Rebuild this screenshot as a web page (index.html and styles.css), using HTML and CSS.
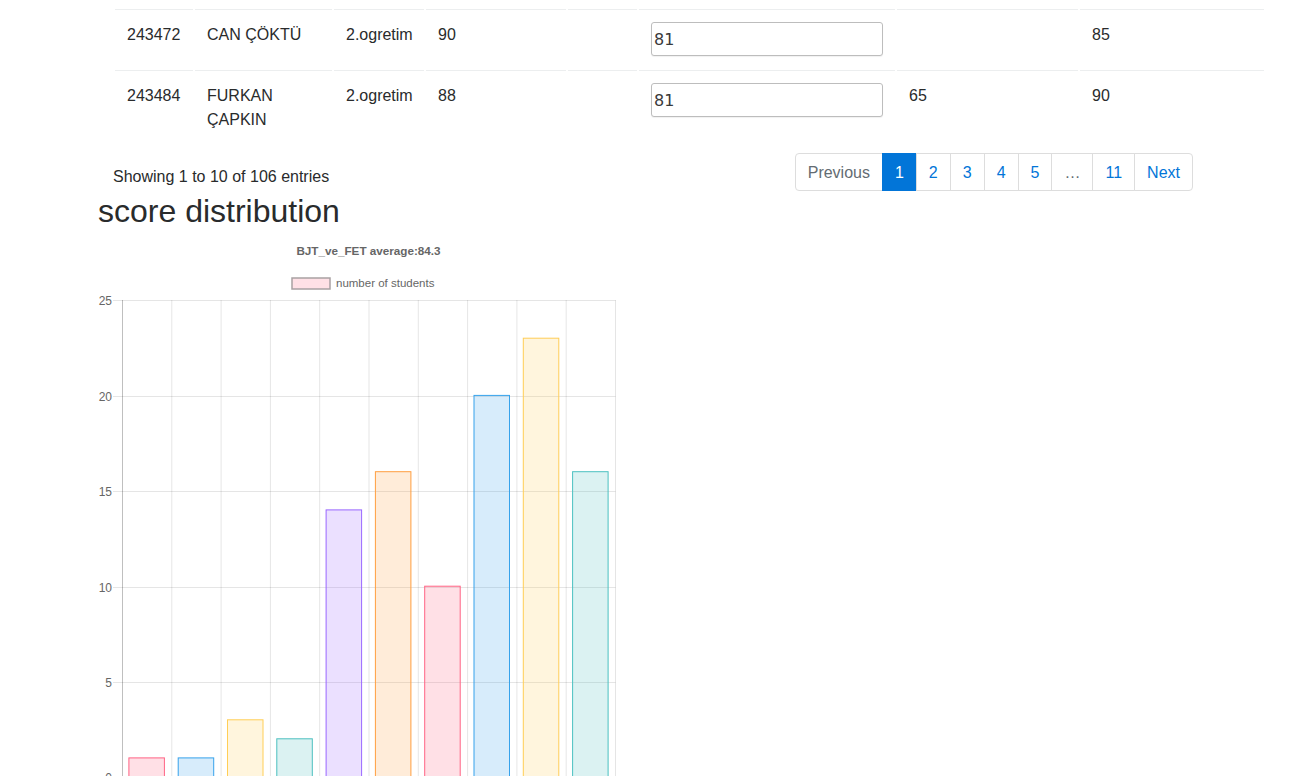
FILE: index.html
```html
<!DOCTYPE html>
<html lang="tr">
<head>
<meta charset="utf-8">
<title>score distribution</title>
<link rel="stylesheet" href="styles.css">
</head>
<body>
<div class="page">
  <div class="table-block">
    <table class="data">
      <colgroup>
        <col class="c-id"><col class="c-name"><col class="c-type"><col class="c-score">
        <col class="c-empty"><col class="c-input"><col class="c-extra"><col class="c-final">
      </colgroup>
      <tbody>
        <tr>
          <td>243472</td>
          <td>CAN ÇÖKTÜ</td>
          <td>2.ogretim</td>
          <td>90</td>
          <td></td>
          <td><input class="grade" type="text" value="81"></td>
          <td></td>
          <td>85</td>
        </tr>
        <tr>
          <td>243484</td>
          <td>FURKAN ÇAPKIN</td>
          <td>2.ogretim</td>
          <td>88</td>
          <td></td>
          <td><input class="grade" type="text" value="81"></td>
          <td>65</td>
          <td>90</td>
        </tr>
      </tbody>
    </table>
    <div class="dt-footer">
      <div class="info">Showing 1 to 10 of 106 entries</div>
      <ul class="pagination">
        <li class="page-item first disabled"><span class="page-link">Previous</span></li>
        <li class="page-item active"><span class="page-link">1</span></li>
        <li class="page-item"><span class="page-link">2</span></li>
        <li class="page-item"><span class="page-link">3</span></li>
        <li class="page-item"><span class="page-link">4</span></li>
        <li class="page-item"><span class="page-link">5</span></li>
        <li class="page-item disabled"><span class="page-link">…</span></li>
        <li class="page-item"><span class="page-link">11</span></li>
        <li class="page-item last"><span class="page-link">Next</span></li>
      </ul>
    </div>
  </div>
  <h2 class="section-title">score distribution</h2>
  <svg class="chart" width="541" height="542" viewBox="0 0 541 542" xmlns="http://www.w3.org/2000/svg">
    <text class="ch-title" x="270.5" y="21" text-anchor="middle">BJT_ve_FET average:84.3</text>
    <rect class="legend-box" x="194" y="44" width="38" height="11"/>
    <text class="ch-legend" x="238" y="53">number of students</text>

    <g class="grid">
      <line x1="15" y1="66.5" x2="517.5" y2="66.5"/>
      <line x1="15" y1="162.5" x2="517.5" y2="162.5"/>
      <line x1="15" y1="257.5" x2="517.5" y2="257.5"/>
      <line x1="15" y1="353.5" x2="517.5" y2="353.5"/>
      <line x1="15" y1="448.5" x2="517.5" y2="448.5"/>
      <line x1="15" y1="543.5" x2="517.5" y2="543.5"/>
      <line x1="73.8" y1="66" x2="73.8" y2="553"/>
      <line x1="123.1" y1="66" x2="123.1" y2="553"/>
      <line x1="172.4" y1="66" x2="172.4" y2="553"/>
      <line x1="221.7" y1="66" x2="221.7" y2="553"/>
      <line x1="271" y1="66" x2="271" y2="553"/>
      <line x1="320.3" y1="66" x2="320.3" y2="553"/>
      <line x1="369.6" y1="66" x2="369.6" y2="553"/>
      <line x1="418.9" y1="66" x2="418.9" y2="553"/>
      <line x1="468.2" y1="66" x2="468.2" y2="553"/>
      <line x1="517.5" y1="66" x2="517.5" y2="553"/>
    </g>
    <line class="axis" x1="24.5" y1="66" x2="24.5" y2="553"/>

    <g class="ticks">
      <text x="14" y="70.5" text-anchor="end">25</text>
      <text x="14" y="166.5" text-anchor="end">20</text>
      <text x="14" y="261.5" text-anchor="end">15</text>
      <text x="14" y="357.5" text-anchor="end">10</text>
      <text x="14" y="452.5" text-anchor="end">5</text>
      <text x="14" y="547.5" text-anchor="end">0</text>
    </g>

    <rect class="bar red" x="30.9" y="523.9" width="35.5" height="19.1"/>
    <rect class="bar blue" x="80.2" y="523.9" width="35.5" height="19.1"/>
    <rect class="bar yellow" x="129.5" y="485.8" width="35.5" height="57.2"/>
    <rect class="bar teal" x="178.8" y="504.8" width="35.5" height="38.2"/>
    <rect class="bar purple" x="228.1" y="275.9" width="35.5" height="267.1"/>
    <rect class="bar orange" x="277.4" y="237.7" width="35.5" height="305.3"/>
    <rect class="bar red" x="326.7" y="352.2" width="35.5" height="190.8"/>
    <rect class="bar blue" x="376" y="161.4" width="35.5" height="381.6"/>
    <rect class="bar yellow" x="425.3" y="104.2" width="35.5" height="438.8"/>
    <rect class="bar teal" x="474.6" y="237.7" width="35.5" height="305.3"/>
  </svg>
</div>
</body>
</html>
```

FILE: styles.css
```css
html, body {
  margin: 0;
  padding: 0;
  background: #fff;
  overflow: hidden;
}

body {
  font-family: "Liberation Sans", Arial, sans-serif;
  font-size: 16px;
  line-height: 1.5;
  color: #292b2c;
}

.page {
  padding-left: 98px;
}

.table-block {
  margin-left: 15px;
  width: 1153px;
}

.data {
  width: 1153px;
  table-layout: fixed;
  border-collapse: separate;
  border-spacing: 2px;
  margin: 7px 0 0;
}

.c-id { width: 78px; }
.c-name { width: 137px; }
.c-type { width: 90px; }
.c-score { width: 140px; }
.c-empty { width: 69px; }
.c-input { width: 256px; }
.c-extra { width: 181px; }
.c-final { width: 184px; }

.data td {
  padding: 13px 12px 11px;
  border-top: 1px solid #eceeef;
  vertical-align: top;
  box-sizing: border-box;
}

.grade {
  display: block;
  width: 100%;
  height: 34px;
  box-sizing: border-box;
  margin: -1px 0 1px;
  padding: 1px 2px;
  border: 1px solid #bdbdbd;
  border-radius: 3px;
  font-family: "DejaVu Sans", sans-serif;
  font-size: 16px;
  color: #3a3a3a;
  background: #fff;
  box-shadow: 0 1px 1px rgba(0, 0, 0, 0.06);
}

.dt-footer {
  display: flex;
  justify-content: space-between;
  align-items: flex-start;
  width: 1080px;
  margin-top: 6px;
}

.info {
  padding-top: 14px;
  line-height: 24px;
  color: #292b2c;
}

.pagination {
  display: flex;
  list-style: none;
  margin: 2px 0;
  padding: 0;
}

.page-link {
  display: block;
  padding: 9px 12px 7px;
  line-height: 1.25;
  border: 1px solid #ddd;
  margin-left: -1px;
  color: #0275d8;
  background: #fff;
}

.first .page-link {
  margin-left: 0;
  border-radius: 4px 0 0 4px;
}

.last .page-link {
  border-radius: 0 4px 4px 0;
}

.disabled .page-link {
  color: #636c72;
}

.active .page-link {
  background: #0275d8;
  border-color: #0275d8;
  color: #fff;
}

.section-title {
  margin: -1px 0 4px;
  font-size: 32px;
  font-weight: 500;
  line-height: 38px;
  color: #292b2c;
}

.chart {
  display: block;
}

.chart text {
  font-family: "Liberation Sans", Arial, sans-serif;
  font-size: 12px;
  fill: #666;
}

.chart .ch-title {
  font-weight: bold;
  font-size: 11.7px;
}

.chart .ch-legend {
  font-size: 11.5px;
}

.legend-box {
  fill: #ffe0e6;
  stroke: #a9a1a3;
  stroke-width: 1.5;
}

.grid line {
  stroke: rgba(0, 0, 0, 0.1);
  stroke-width: 1;
}

.axis {
  stroke: rgba(0, 0, 0, 0.25);
  stroke-width: 1;
}

.bar { stroke-width: 1; }
.bar.red { fill: rgba(255, 99, 132, 0.2); stroke: rgb(255, 99, 132); }
.bar.blue { fill: rgba(54, 162, 235, 0.2); stroke: rgb(54, 162, 235); }
.bar.yellow { fill: rgba(255, 206, 86, 0.2); stroke: rgb(255, 206, 86); }
.bar.teal { fill: rgba(75, 192, 192, 0.2); stroke: rgb(75, 192, 192); }
.bar.purple { fill: rgba(153, 102, 255, 0.2); stroke: rgb(153, 102, 255); }
.bar.orange { fill: rgba(255, 159, 64, 0.2); stroke: rgb(255, 159, 64); }
```
